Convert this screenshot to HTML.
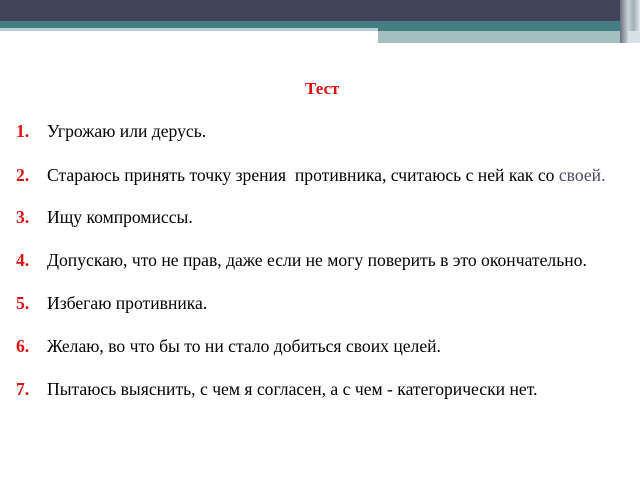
<html><head><style>
body{margin:0;width:640px;height:480px;background:#fff;position:relative;overflow:hidden;font-family:"Liberation Serif",serif;}
.b{position:absolute}
.l{position:absolute;left:16px;font-size:17.6px;color:#000;white-space:nowrap}
.l b{color:#e01010;display:inline-block;width:31px}
</style></head><body>
<div class="b" style="left:0;top:0;width:640px;height:21px;background:#42445a"></div>
<div class="b" style="left:0;top:21px;width:640px;height:10px;background:#447e82"></div>
<div class="b" style="left:0;top:28px;width:378px;height:3px;background:#b9d0d2"></div>
<div class="b" style="left:378px;top:31px;width:250px;height:12px;background:#a3bfc2"></div>
<div class="b" style="left:620px;top:0;width:20px;height:43px;background:linear-gradient(90deg,#6a6e80,#c8d2d6 40%,#a0b0b6 70%,#e4eaec)"></div>
<div class="b" style="left:628px;top:31px;width:12px;height:12px;background:#d8e2e4"></div>
<div class="b" style="left:305px;top:79px;font-size:17px;font-weight:bold;color:#e01010">Тест</div>
<div class="l" style="top:121px"><b>1.</b>Угрожаю или дерусь.</div>
<div class="l" style="top:165px"><b>2.</b>Стараюсь принять точку зрения&nbsp; противника, считаюсь с ней как со <span style="color:#4a4a6a">своей.</span></div>
<div class="l" style="top:207px"><b>3.</b>Ищу компромиссы.</div>
<div class="l" style="top:250px"><b>4.</b>Допускаю, что не прав, даже если не могу поверить в это окончательно.</div>
<div class="l" style="top:293px"><b>5.</b>Избегаю противника.</div>
<div class="l" style="top:336px"><b>6.</b>Желаю, во что бы то ни стало добиться своих целей.</div>
<div class="l" style="top:379px"><b>7.</b>Пытаюсь выяснить, с чем я согласен, а с чем - категорически нет.</div>
</body></html>
